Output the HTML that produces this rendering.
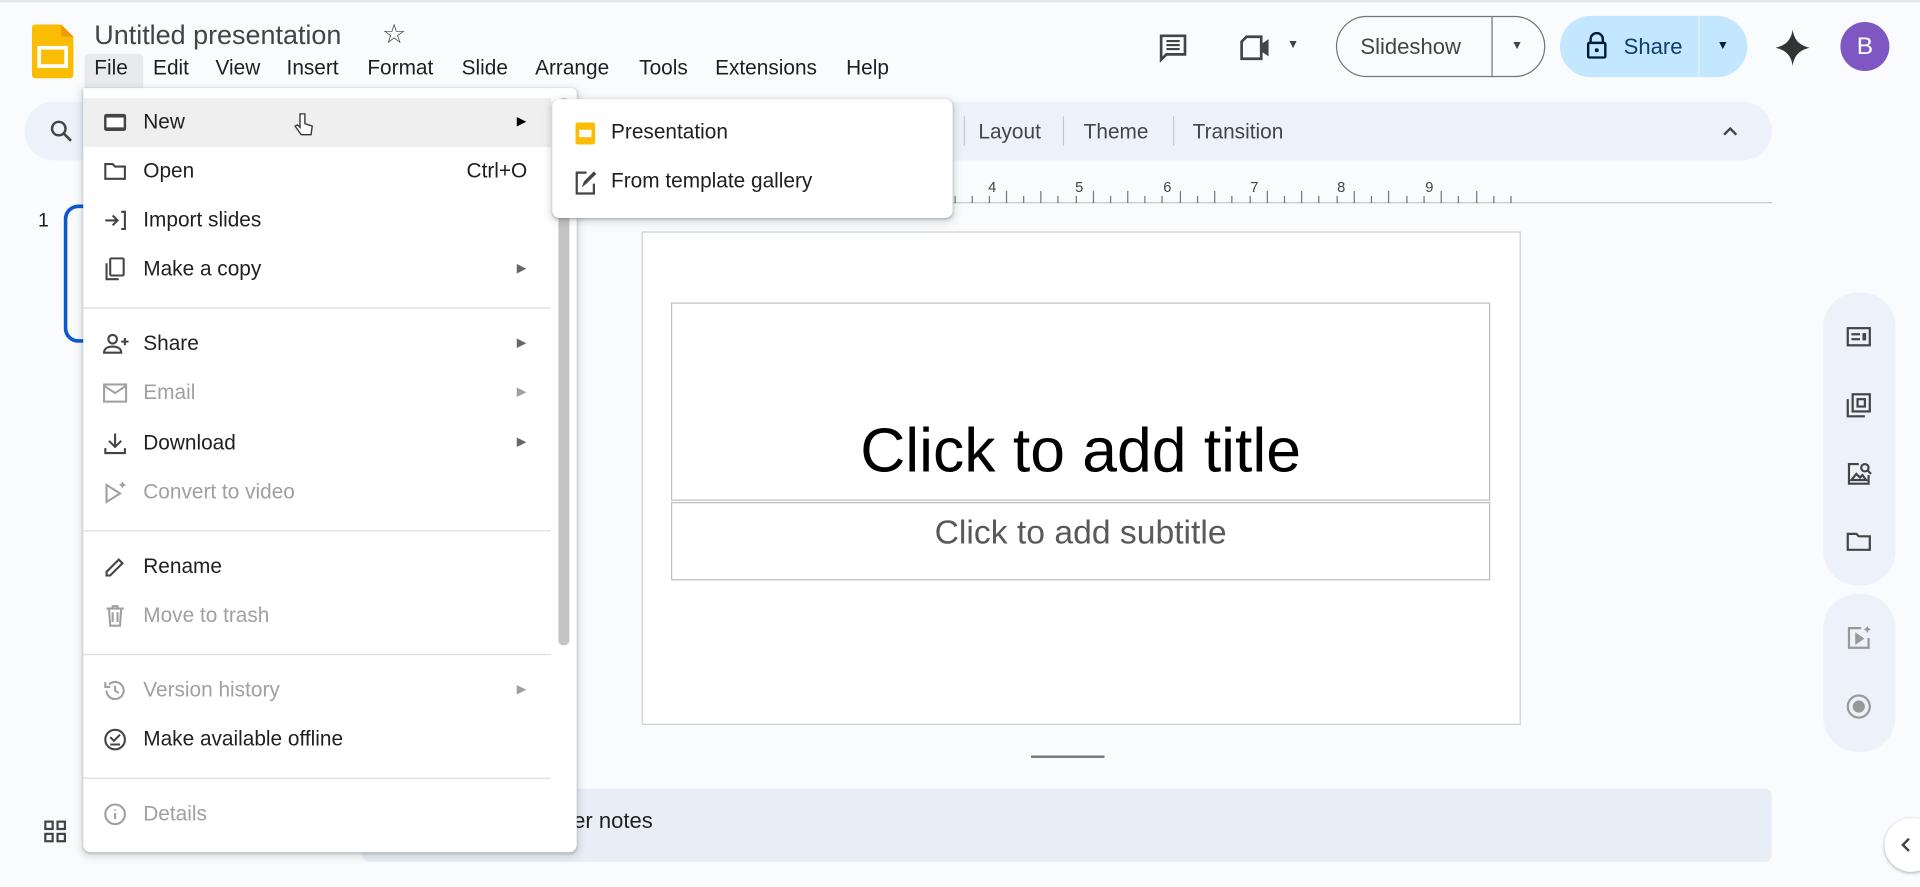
<!DOCTYPE html>
<html><head><meta charset="utf-8"><style>
*{box-sizing:border-box;margin:0;padding:0}
html,body{width:1920px;height:887px;overflow:hidden;background:#f9fbfd}
#w{position:absolute;left:0;top:0;width:1568px;height:724px;transform:scale(1.22449);transform-origin:0 0;font-family:"Liberation Sans",Arial,sans-serif;color:#1f1f1f;background:#f9fbfd}
.a{position:absolute}
.mi{position:absolute;left:0;width:382px;height:40px;font-size:17px;line-height:40px;padding-left:49px}
.mi svg{position:absolute;left:16px;top:10px}
.mi .ar{position:absolute;left:354px;top:0;font-size:10px}
.dis{color:#a0a0a0}
.sep{position:absolute;left:0;width:382px;height:1px;background:#dadce0}
.menu span{position:absolute;top:46px;font-size:17px}
</style></head><body><div id="w">
<div class="a" style="left:0;top:0;width:1568px;height:2px;background:#e3e6ea"></div>
<svg class="a" style="left:26px;top:20px" width="34" height="44" viewBox="0 0 34 44"><path d="M3 0h21l10 10v31a3 3 0 0 1-3 3H3a3 3 0 0 1-3-3V3a3 3 0 0 1 3-3z" fill="#fbbc04"/><path d="M24 0l10 10H26a2 2 0 0 1-2-2z" fill="#f29900"/><rect x="6" y="19" width="22" height="15" fill="none" stroke="#fff" stroke-width="3"/></svg>
<div class="a" style="left:77px;top:16px;font-size:22px;color:#444">Untitled presentation</div>
<div class="a" style="left:312px;top:15px;font-size:22px;color:#444">☆</div>
<div class="a" style="left:69px;top:44px;width:48px;height:28px;background:#e8eaed;border-radius:4px 4px 0 0"></div>
<div class="menu">
<span style="left:77px">File</span><span style="left:125px">Edit</span><span style="left:176px">View</span><span style="left:234px">Insert</span><span style="left:300px">Format</span><span style="left:377px">Slide</span><span style="left:437px">Arrange</span><span style="left:522px">Tools</span><span style="left:584px">Extensions</span><span style="left:691px">Help</span></div>
<svg class="a" style="left:945px;top:26px" width="26" height="26" viewBox="0 0 24 24"><path d="M3 3h18v14H7l-4 4z" fill="none" stroke="#444" stroke-width="2"/><path d="M7 7h10M7 10h10M7 13h10" stroke="#444" stroke-width="1.6"/></svg>
<svg class="a" style="left:1012px;top:27px" width="28" height="24" viewBox="0 0 28 24"><path d="M6 3h12v18H2V7z" fill="none" stroke="#444" stroke-width="2.2"/><path d="M18 9l6-4v14l-6-4z" fill="#444"/></svg>
<div class="a" style="left:1051px;top:31px;font-size:10px;color:#444">▼</div>
<div class="a" style="left:1091px;top:13px;width:171px;height:50px;border:1px solid #747775;border-radius:25px"></div>
<div class="a" style="left:1218px;top:13px;width:1px;height:50px;background:#747775"></div>
<div class="a" style="left:1111px;top:28px;font-size:18px;color:#444">Slideshow</div>
<div class="a" style="left:1234px;top:32px;font-size:10px;color:#444">▼</div>
<div class="a" style="left:1274px;top:13px;width:153px;height:50px;background:#c2e7ff;border-radius:25px"></div>
<div class="a" style="left:1387px;top:13px;width:1px;height:50px;background:#e8f4fc"></div>
<svg class="a" style="left:1295px;top:26px" width="18" height="22" viewBox="0 0 18 22"><path d="M4 9V6a5 5 0 0 1 10 0v3" fill="none" stroke="#001d35" stroke-width="2"/><rect x="2" y="9" width="14" height="12" rx="1" fill="none" stroke="#001d35" stroke-width="2"/><circle cx="9" cy="15" r="1.6" fill="#001d35"/></svg>
<div class="a" style="left:1326px;top:28px;font-size:18px;color:#0b3f6e">Share</div>
<div class="a" style="left:1402px;top:32px;font-size:10px;color:#001d35">▼</div>
<svg class="a" style="left:1450px;top:24px" width="28" height="30" viewBox="0 0 28 30"><path d="M14 0C15 8 19 13 28 15C19 17 15 22 14 30C13 22 9 17 0 15C9 13 13 8 14 0z" fill="#333"/></svg>
<div class="a" style="left:1503px;top:18px;width:40px;height:40px;border-radius:50%;background:#7e57c2;color:#fff;font-size:20px;line-height:40px;text-align:center">B</div>
<div class="a" style="left:20px;top:83px;width:1427px;height:48px;background:#edf2fa;border-radius:24px"></div>
<svg class="a" style="left:40px;top:97px" width="20" height="20" viewBox="0 0 20 20"><circle cx="8" cy="8" r="5.5" fill="none" stroke="#444" stroke-width="2"/><path d="M12 12l6 6" stroke="#444" stroke-width="2.2"/></svg>
<div class="a" style="left:787px;top:95px;width:1px;height:24px;background:#c7c7c7"></div>
<div class="a" style="left:868px;top:95px;width:1px;height:24px;background:#c7c7c7"></div>
<div class="a" style="left:958px;top:95px;width:1px;height:24px;background:#c7c7c7"></div>
<div class="a" style="left:799px;top:98px;font-size:17px;color:#444">Layout</div>
<div class="a" style="left:885px;top:98px;font-size:17px;color:#444">Theme</div>
<div class="a" style="left:974px;top:98px;font-size:17px;color:#444">Transition</div>
<svg class="a" style="left:1406px;top:102px" width="14" height="10" viewBox="0 0 14 10"><path d="M2 8l5-5 5 5" fill="none" stroke="#444" stroke-width="2"/></svg>
<div class="a" style="left:470px;top:165px;width:977px;height:1px;background:#c7c7c7"></div>
<svg class="a" style="left:470px;top:140px" width="780" height="26">
<g stroke="#777" stroke-width="1">
<path d="M310 20v6M324 20v6M338 20v6M352 16v10M366 20v6M380 20v6M394 20v6M409 20v6M423 20v6M437 20v6M451 20v6M465 20v6M479 20v6M494 20v6M508 20v6M522 20v6M536 20v6M551 20v6M565 20v6M579 20v6M593 20v6M607 20v6M622 20v6M636 20v6M650 20v6M664 20v6M679 20v6M693 20v6M707 20v6M721 20v6M736 20v6M750 20v6M764 20v6M380 16v10M451 16v10M522 16v10M593 16v10M664 16v10M736 16v10M423 16v10M494 16v10M565 16v10M636 16v10M707 16v10"/></g>
<g font-size="12" fill="#444" font-family="Liberation Sans"><text x="337" y="17">4</text><text x="408" y="17">5</text><text x="480" y="17">6</text><text x="551" y="17">7</text><text x="622" y="17">8</text><text x="694" y="17">9</text></g></svg>
<div class="a" style="left:524px;top:189px;width:718px;height:403px;background:#fff;border:1px solid #d0d0d0"></div>
<div class="a" style="left:548px;top:247px;width:669px;height:162px;border:1px solid #bdbdbd"></div>
<div class="a" style="left:548px;top:338px;width:669px;text-align:center;font-size:51px;color:#000">Click to add title</div>
<div class="a" style="left:548px;top:410px;width:669px;height:64px;border:1px solid #bdbdbd"></div>
<div class="a" style="left:548px;top:419px;width:669px;text-align:center;font-size:27.5px;color:#595959">Click to add subtitle</div>
<div class="a" style="left:842px;top:617px;width:60px;height:2px;background:#777"></div>
<div class="a" style="left:296px;top:644px;width:1151px;height:60px;background:#e9eef6;border-radius:6px"></div>
<div class="a" style="left:321px;top:660px;font-size:18px;color:#1f1f1f">Click to add speaker notes</div>
<div class="a" style="left:31px;top:172px;font-size:16px">1</div>
<div class="a" style="left:52px;top:167px;width:40px;height:113px;border:3px solid #0b57d0;border-right:none;border-radius:12px 0 0 12px"></div>
<svg class="a" style="left:36px;top:670px" width="18" height="18" viewBox="0 0 18 18"><g fill="none" stroke="#444" stroke-width="1.8"><rect x="1" y="1" width="6" height="6"/><rect x="11" y="1" width="6" height="6"/><rect x="1" y="11" width="6" height="6"/><rect x="11" y="11" width="6" height="6"/></g></svg>
<div class="a" style="left:1489px;top:239px;width:59px;height:239px;background:#edf2fa;border-radius:28px"></div>
<div class="a" style="left:1489px;top:485px;width:59px;height:129px;background:#edf2fa;border-radius:28px"></div>
<svg class="a" style="left:1507px;top:264px" width="22" height="22" viewBox="0 0 22 22"><g fill="none" stroke="#444" stroke-width="1.8"><rect x="2" y="4" width="18" height="14"/><path d="M5 9h7M5 13h7"/></g><rect x="14" y="8" width="3" height="6" fill="#444"/></svg>
<svg class="a" style="left:1507px;top:320px" width="22" height="22" viewBox="0 0 22 22"><g fill="none" stroke="#444" stroke-width="1.8"><rect x="6" y="2" width="14" height="14"/><path d="M2 6v14h14"/><rect x="10" y="6" width="6" height="6"/></g></svg>
<svg class="a" style="left:1507px;top:376px" width="22" height="22" viewBox="0 0 22 22"><g fill="none" stroke="#444" stroke-width="1.8"><path d="M11 3H3v16h16v-7"/><circle cx="16" cy="6" r="3"/><path d="M18 8l3 3"/><path d="M5 16l4-5 3 3 2-2 3 4z"/></g></svg>
<svg class="a" style="left:1507px;top:431px" width="22" height="22" viewBox="0 0 22 22"><path d="M2 5h7l2 2h9v11H2z" fill="none" stroke="#444" stroke-width="1.8"/></svg>
<svg class="a" style="left:1507px;top:510px" width="22" height="22" viewBox="0 0 22 22"><g fill="none" stroke="#999" stroke-width="1.8"><path d="M13 3H3v16h16v-8"/><path d="M9 8v7l5-3.5z" fill="#999"/></g><path d="M18 1l1 2 2 1-2 1-1 2-1-2-2-1 2-1z" fill="#999"/></svg>
<svg class="a" style="left:1507px;top:566px" width="22" height="22" viewBox="0 0 22 22"><circle cx="11" cy="11" r="9" fill="none" stroke="#999" stroke-width="1.8"/><circle cx="11" cy="11" r="5" fill="#999"/></svg>
<div class="a" style="left:1539px;top:668px;width:44px;height:44px;border-radius:50%;background:#fff;box-shadow:0 1px 3px rgba(0,0,0,.3)"></div>
<svg class="a" style="left:1550px;top:683px" width="12" height="14" viewBox="0 0 12 14"><path d="M9 2L4 7l5 5" fill="none" stroke="#444" stroke-width="2"/></svg>
<div class="a" style="left:68px;top:72px;width:403px;height:624px;background:#fff;border-radius:0 4px 6px 6px;box-shadow:0 2px 6px 2px rgba(60,64,67,.15),0 1px 2px rgba(60,64,67,.3)">
<div class="a" style="left:388px;top:8px;width:9px;height:447px;background:#c4c4c4;border-radius:4px"></div>
<div class="mi" style="top:8px;background:#efefef">New<svg width="20" height="20" viewBox="0 0 20 20"><rect x="1" y="3" width="18" height="14" rx="2" fill="#444"/><rect x="3" y="6" width="14" height="8" fill="#fff"/></svg><span class="ar" style="color:#000">▶</span></div>
<svg class="a" style="left:172px;top:19px" width="16" height="22" viewBox="0 0 16 22"><path d="M5 2v11l-2-2-2 1 5 7h8l1-7-6-2V2z" fill="#fff" stroke="#333" stroke-width="1.1"/></svg>
<div class="mi" style="top:48px">Open<svg width="20" height="20" viewBox="0 0 20 20"><path d="M2 4h6l2 2h8v10H2z" fill="none" stroke="#444" stroke-width="1.7"/></svg><span style="position:absolute;left:313px">Ctrl+O</span></div>
<div class="mi" style="top:88px">Import slides<svg width="20" height="20" viewBox="0 0 20 20"><g fill="none" stroke="#444" stroke-width="1.7"><path d="M2 10h9M8 6l4 4-4 4M15 3h3v14h-3"/></g></svg></div>
<div class="mi" style="top:128px">Make a copy<svg width="20" height="20" viewBox="0 0 20 20"><g fill="none" stroke="#444" stroke-width="1.7"><rect x="6" y="1" width="11" height="14" rx="1"/><path d="M3 5v13h10"/></g></svg><span class="ar" style="color:#666">▶</span></div>
<div class="sep" style="top:179px"></div>
<div class="mi" style="top:189px">Share<svg width="22" height="20" viewBox="0 0 22 20"><g fill="none" stroke="#444" stroke-width="1.7"><circle cx="8" cy="6" r="3.5"/><path d="M1 17c0-4 4-5 7-5s7 1 7 5z"/><path d="M18 5v6M15 8h6"/></g></svg><span class="ar" style="color:#666">▶</span></div>
<div class="mi dis" style="top:229px">Email<svg width="20" height="20" viewBox="0 0 20 20"><g fill="none" stroke="#a0a0a0" stroke-width="1.7"><rect x="1" y="3" width="18" height="14"/><path d="M1 4l9 6 9-6"/></g></svg><span class="ar">▶</span></div>
<div class="mi" style="top:270px">Download<svg width="20" height="20" viewBox="0 0 20 20"><g fill="none" stroke="#444" stroke-width="1.7"><path d="M10 2v10M5 8l5 5 5-5M2 14v4h16v-4"/></g></svg><span class="ar" style="color:#666">▶</span></div>
<div class="mi dis" style="top:310px">Convert to video<svg width="20" height="20" viewBox="0 0 20 20"><path d="M3 4v14l11-7z" fill="none" stroke="#a0a0a0" stroke-width="1.7"/><path d="M16 1l1 2 2 1-2 1-1 2-1-2-2-1 2-1z" fill="#a0a0a0"/></svg></div>
<div class="sep" style="top:361px"></div>
<div class="mi" style="top:371px">Rename<svg width="20" height="20" viewBox="0 0 20 20"><path d="M3 17v-3L13 4l3 3L6 17z" fill="none" stroke="#444" stroke-width="1.7"/></svg></div>
<div class="mi dis" style="top:411px">Move to trash<svg width="20" height="20" viewBox="0 0 20 20"><g fill="none" stroke="#a0a0a0" stroke-width="1.7"><path d="M3 4h14M8 4V2h4v2M5 4l1 14h8l1-14M8 7v8M12 7v8"/></g></svg></div>
<div class="sep" style="top:462px"></div>
<div class="mi dis" style="top:472px">Version history<svg width="20" height="20" viewBox="0 0 20 20"><g fill="none" stroke="#a0a0a0" stroke-width="1.7"><path d="M3 10a7 7 0 1 0 2-5M2 3v4h4M10 6v4l3 2"/></g></svg><span class="ar">▶</span></div>
<div class="mi" style="top:512px">Make available offline<svg width="20" height="20" viewBox="0 0 20 20"><g fill="none" stroke="#444" stroke-width="1.7"><circle cx="10" cy="10" r="8"/><path d="M6 8l3 3 5-5M6 14h8"/></g></svg></div>
<div class="sep" style="top:563px"></div>
<div class="mi dis" style="top:573px">Details<svg width="20" height="20" viewBox="0 0 20 20"><g fill="none" stroke="#a0a0a0" stroke-width="1.7"><circle cx="10" cy="10" r="8"/><path d="M10 9v5M10 6v1"/></g></svg></div>
</div>
<div class="a" style="left:451px;top:81px;width:327px;height:97px;background:#fff;border-radius:6px;box-shadow:0 2px 6px 2px rgba(60,64,67,.15),0 1px 2px rgba(60,64,67,.3)">
<svg class="a" style="left:18px;top:18px" width="18" height="20" viewBox="0 0 18 20"><rect x="1" y="1" width="16" height="18" rx="2" fill="#fbbc04"/><rect x="4" y="7" width="10" height="6" fill="#fff"/></svg>
<div class="a" style="left:48px;top:17px;font-size:17px">Presentation</div>
<svg class="a" style="left:18px;top:57px" width="20" height="22" viewBox="0 0 20 22"><path d="M10 3H2v17h14v-8" fill="none" stroke="#444" stroke-width="1.8"/><path d="M6 15l2-5 8-8 2 2-8 8z" fill="#444"/></svg>
<div class="a" style="left:48px;top:57px;font-size:17px">From template gallery</div>
</div>
</div></body></html>
